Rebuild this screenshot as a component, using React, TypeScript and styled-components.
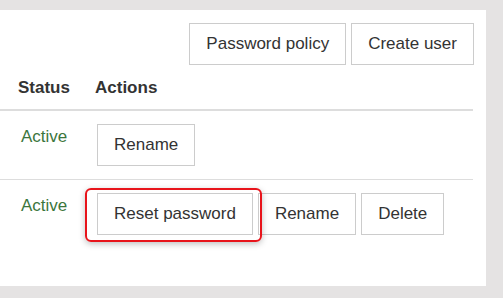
import React from 'react';
import styled, { createGlobalStyle } from 'styled-components';

const GlobalStyle = createGlobalStyle`
  body {
    margin: 0;
    background: #e5e3e3;
    font-family: 'Liberation Sans', Arial, sans-serif;
    color: #333;
  }
`;

type User = { status: string; actions: string[]; highlight?: string };

const users: User[] = [
  { status: 'Active', actions: ['Rename'] },
  { status: 'Active', actions: ['Reset password', 'Rename', 'Delete'], highlight: 'Reset password' },
];

export default function App() {
  return (
    <>
      <GlobalStyle />
      <Panel>
        <Toolbar>
          <Button>Password policy</Button>
          <Button>Create user</Button>
        </Toolbar>
        <Table>
          <HeadRow>
            <HeadCell>Status</HeadCell>
            <HeadCell $action>Actions</HeadCell>
          </HeadRow>
          {users.map((u, i) => (
            <Row key={i} $last={i === users.length - 1}>
              <StatusCell>{u.status}</StatusCell>
              <ActionCell>
                {u.actions.map((a) =>
                  a === u.highlight ? (
                    <Highlight key={a}>
                      <Button>{a}</Button>
                      <Ring />
                    </Highlight>
                  ) : (
                    <Button key={a}>{a}</Button>
                  )
                )}
              </ActionCell>
            </Row>
          ))}
        </Table>
      </Panel>
    </>
  );
}

const Panel = styled.div`
  margin-top: 10px;
  width: 473px;
  height: 276px;
  padding-right: 13px;
  background: #fff;
`;

const Toolbar = styled.div`
  display: flex;
  justify-content: flex-end;
  gap: 5px;
  padding-top: 13px;
  margin-right: -1px;
`;

const Button = styled.button`
  font-family: inherit;
  font-size: 17px;
  line-height: 20px;
  height: 42px;
  padding: 0 16px;
  color: #333;
  background: #fff;
  border: 1px solid #ccc;
  border-radius: 0;
  white-space: nowrap;
`;

const Table = styled.div`
  display: grid;
  grid-template-columns: 87px 1fr;
`;

const HeadRow = styled.div`
  display: contents;
`;

const HeadCell = styled.div<{ $action?: boolean }>`
  font-size: 17px;
  font-weight: bold;
  line-height: 22px;
  padding: 12px 0 10px ${(p) => (p.$action ? '8px' : '18px')};
  border-bottom: 2px solid #ddd;
`;

const Row = styled.div<{ $last?: boolean }>`
  display: contents;
  & > div {
    border-bottom: ${(p) => (p.$last ? 'none' : '1px solid #ddd')};
  }
`;

const StatusCell = styled.div`
  font-size: 17px;
  line-height: 22px;
  color: #3c763d;
  padding: 15px 0 11px 21px;
`;

const ActionCell = styled.div`
  display: flex;
  gap: 5px;
  padding: 13px 0 13px 10px;
`;

const Highlight = styled.div`
  position: relative;
  display: flex;
`;

const Ring = styled.div`
  position: absolute;
  left: -12px;
  top: -5px;
  right: -9px;
  bottom: -7px;
  border: 2px solid #e8141b;
  border-radius: 6px;
  box-shadow: 0 2px 6px rgba(0, 0, 0, 0.25);
  pointer-events: none;
`;
